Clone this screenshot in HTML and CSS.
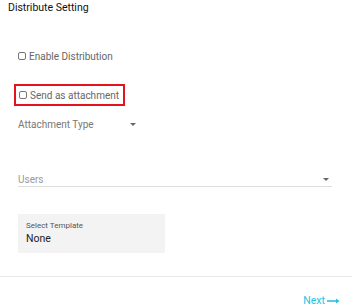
FILE: index.html
```html
<!DOCTYPE html>
<html>
<head>
    <meta charset="UTF-8">
    <title>Distribute Setting</title>
    <link rel="stylesheet" href="styles.css">
</head>
<body>
    <div class="panel">
        <h3 class="title">Distribute Setting</h3>
        <div class="form">
            <label class="check check-first"><input type="checkbox"><span>Enable Distribution</span></label>
            <label class="check check-mark"><input type="checkbox"><span>Send as attachment</span></label>
            <div class="select select-short">
                <span>Attachment Type</span>
                <i class="caret"></i>
            </div>
            <div class="select select-line">
                <span>Users</span>
                <i class="caret"></i>
            </div>
            <div class="template">
                <p class="tpl-label">Select Template</p>
                <p class="tpl-value">None</p>
            </div>
        </div>
        <div class="footer">
            <a class="next">Next <svg width="13" height="6" viewBox="0 0 13 6"><path d="M0 3h10" stroke="currentColor" stroke-width="1.6"/><path d="M9 0.5l3.5 2.5-3.5 2.5z" fill="currentColor"/></svg></a>
        </div>
    </div>
</body>
</html>
```

FILE: styles.css
```css
body{margin:0;font-family:Roboto,"Liberation Sans",sans-serif;background:#fff;}
p,h3{margin:0;}

.panel{
    width: 352px;
}
.title{
    padding: 1px 8px 0;
    font-size: 10.5px;
    font-weight: 400;
    line-height: 13px;
    color: #111;
}
.form{
    padding: 35px 0 0 18px;
}
.check{
    display: flex;
    align-items: center;
    font-size: 10px;
    color: #666;
}
.check input{
    appearance: none;
    box-sizing: border-box;
    width: 8px;
    height: 8px;
    margin: 0 3px 0 0;
    border: 1px solid #777;
    border-radius: 2px;
    background: #fff;
}
.check-first{
    height: 14px;
}
.check-mark{
    box-sizing: border-box;
    width: 111px;
    height: 22px;
    margin: 21px 0 0 -4px;
    padding-left: 3px;
    border: 2px solid #e3121c;
}
.select{
    display: flex;
    align-items: center;
    justify-content: space-between;
    font-size: 10px;
    color: #777;
}
.select-short{
    width: 121px;
    height: 14px;
    margin-top: 11px;
}
.select-line{
    width: 314px;
    height: 14px;
    margin-top: 41px;
    border-bottom: 1px solid #ddd;
    color: #999;
}
.caret{
    width: 0;
    height: 0;
    margin-right: 3px;
    border-left: 3px solid transparent;
    border-right: 3px solid transparent;
    border-top: 3px solid #666;
}
.template{
    width: 139px;
    height: 28px;
    margin-top: 27px;
    padding: 7px 0 4px 8px;
    background: #f3f3f3;
}
.tpl-label{
    font-size: 8px;
    line-height: 10px;
    color: #555;
}
.tpl-value{
    font-size: 10.5px;
    line-height: 16px;
    color: #222;
}
.footer{
    margin-top: 23px;
    border-top: 1px solid #e8e8e8;
    height: 30px;
    display: flex;
    align-items: flex-end;
    justify-content: flex-end;
    padding-right: 12px;
}
.next{
    display: flex;
    align-items: center;
    gap: 2px;
    font-size: 10.5px;
    color: #27c2df;
}
```
